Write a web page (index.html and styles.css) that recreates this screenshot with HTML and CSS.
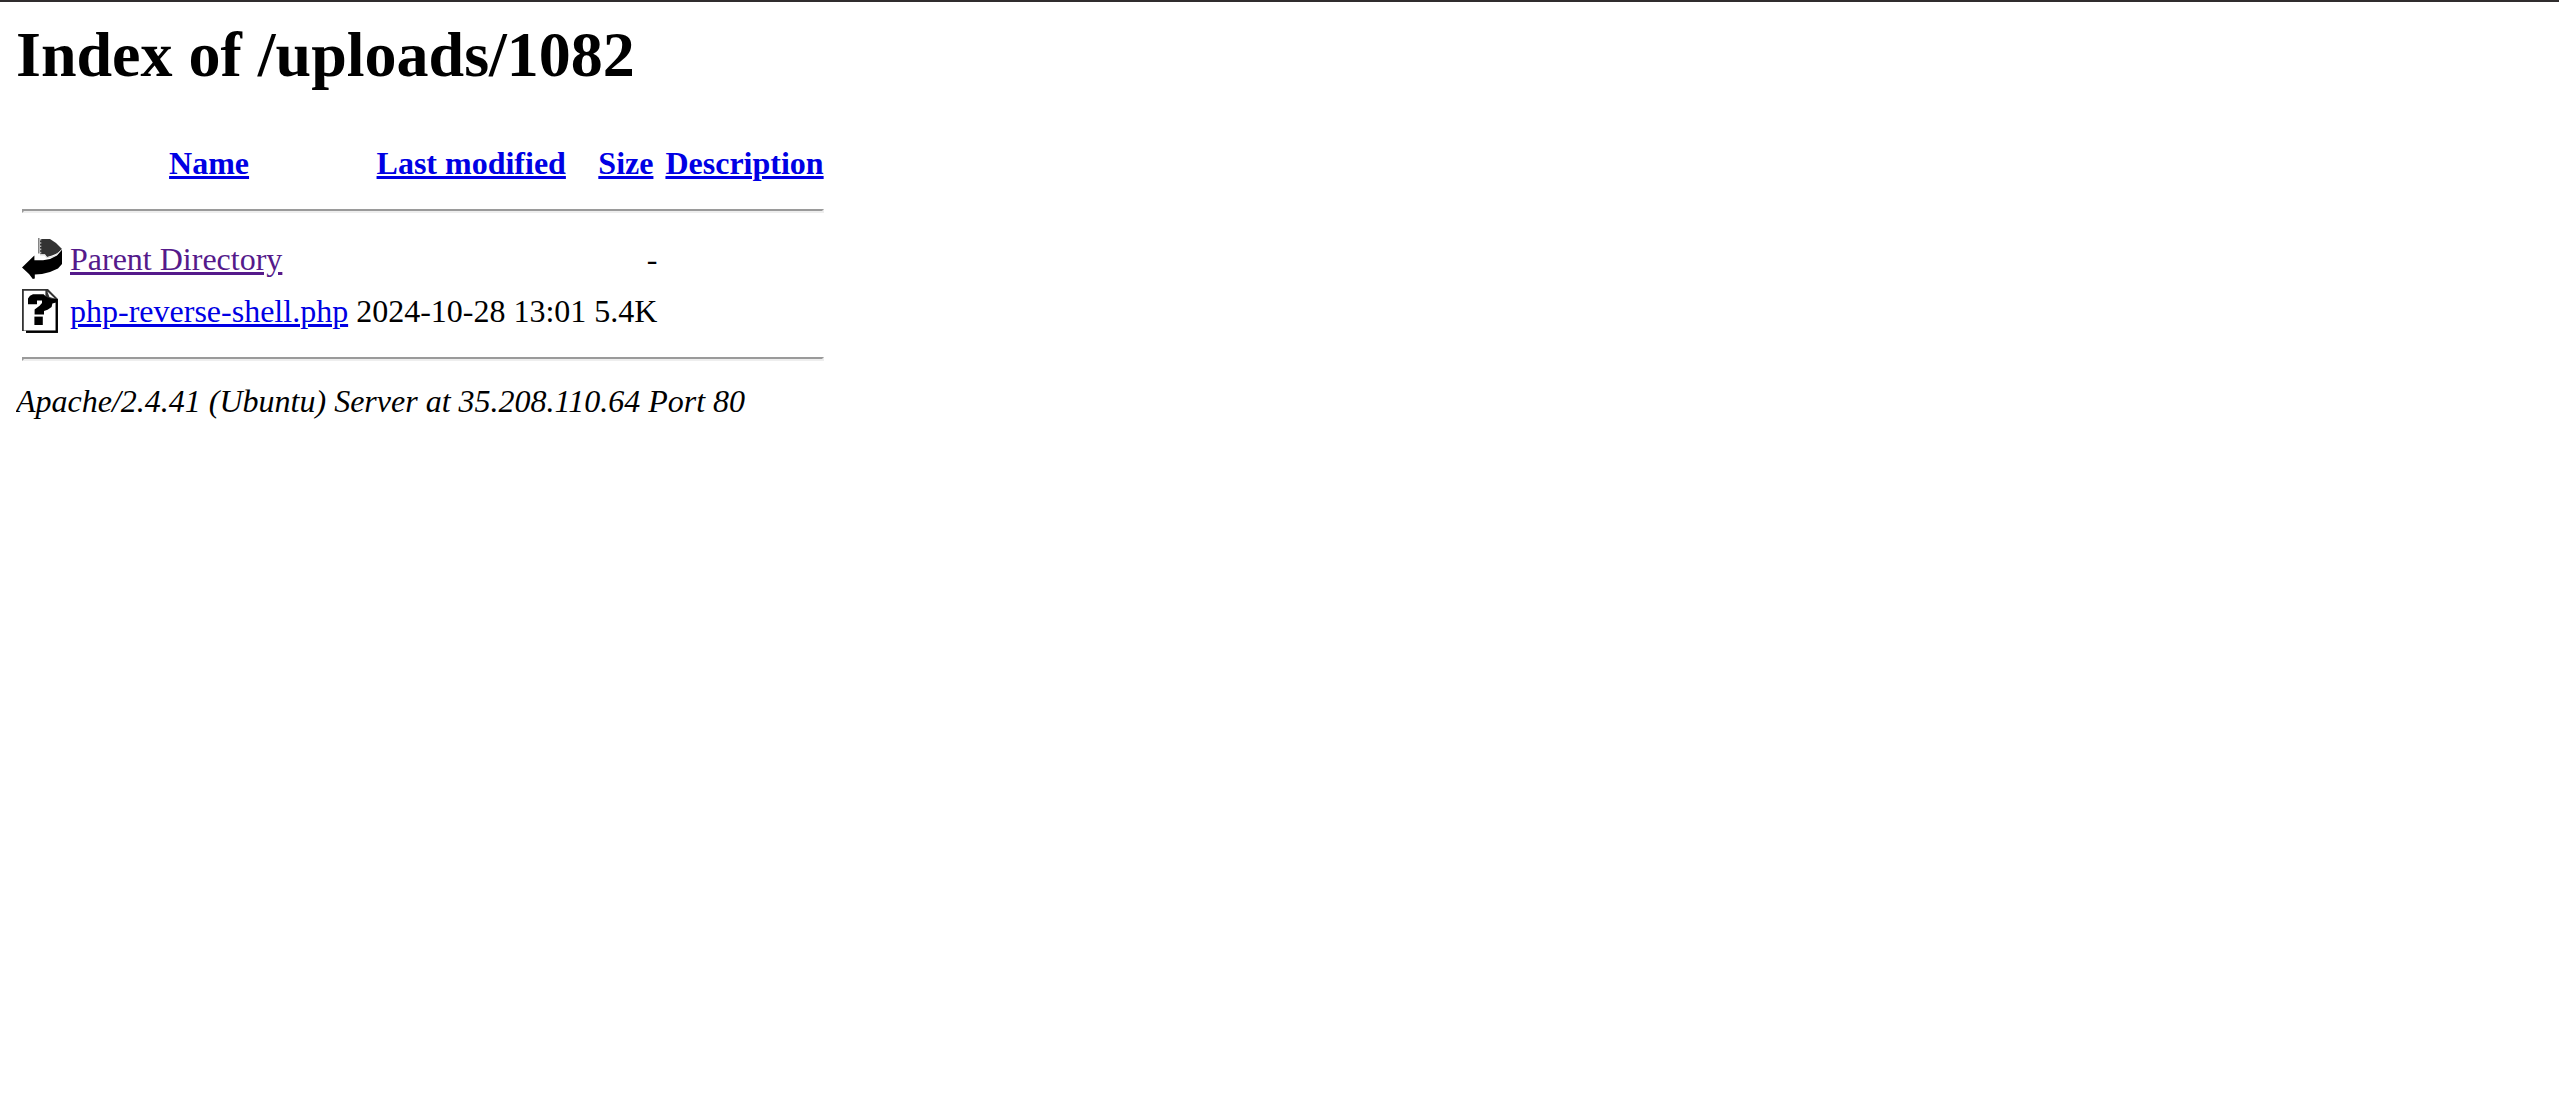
FILE: index.html
```html
<!DOCTYPE html>
<html lang="en">
<head>
<meta charset="utf-8">
<title>Index of /uploads/1082</title>
<link rel="stylesheet" href="styles.css">
</head>
<body>
<h1>Index of /uploads/1082</h1>
<table class="listing">
  <thead>
    <tr class="entry">
      <td></td>
      <th scope="col"><a href="#name">Name</a></th>
      <th scope="col"><a href="#modified">Last modified</a></th>
      <th scope="col"><a href="#size">Size</a></th>
      <th scope="col"><a href="#description">Description</a></th>
    </tr>
    <tr><td colspan="5"><hr></td></tr>
  </thead>
  <tbody>
    <tr class="entry">
      <td>
        <svg class="icon" viewBox="0 0 20 22" role="img" aria-label="Parent directory">
          <path fill="#333" d="M9 1L14 1L17 3L19 5L20 6L18 8L15 9.3L12.5 10L11.5 8.6H9Z"/>
          <path fill="none" stroke="#bbb" stroke-width="0.7" stroke-dasharray="0.8 0.8" d="M9.3 1V8.5"/>
          <path fill="none" stroke="#777" stroke-width="0.7" d="M8.4 0.5V8.3"/>
          <path fill="none" stroke="#ddd" stroke-width="0.5" d="M9 9H11.5L12.3 10.4L16 9.7L19.8 6.4"/>
          <path fill="#000" d="M0 15.2L5 10.4L6.2 9.3V11.6H10.5L14 11L17.5 9.3L20 6.4V13.5L18 15.7L14 17.5L10 18.5L6.4 18.8V20.7L5.4 21L3.5 18.5Z"/>
        </svg>
      </td>
      <td><a class="visited" href="#parent">Parent Directory</a></td>
      <td></td>
      <td class="number">-</td>
      <td></td>
    </tr>
    <tr class="entry">
      <td>
        <svg class="icon" viewBox="0 0 20 22" role="img" aria-label="Unknown file type">
          <path fill="#333" d="M0 0H13L18 5V22H2V21H0Z"/>
          <path fill="#fff" d="M0.9 0.9H11.7V4L13 5.7H16.8V20.8H0.9Z"/>
          <path fill="#fff" d="M12.7 1.2L16.4 4.8L13.7 4Z"/>
          <path fill="none" stroke="#000" stroke-width="1" d="M2 21.4H17.4V5"/>
          <path fill="#000" d="M5.5 2.6H10.8L12.2 4L15 5H17.5V6.6L15.2 7.2L14.8 9L12.8 10.4L11 11V12.8H6.3V10.3L8.8 8.4L10 7V5.8H7.5V7.6H3V4.8L4 3.4Z"/>
          <path fill="#000" d="M6.2 13.8H10.4V18H6.2Z"/>
        </svg>
      </td>
      <td><a href="#file">php-reverse-shell.php</a></td>
      <td class="number">2024-10-28 13:01</td>
      <td class="number">5.4K</td>
      <td></td>
    </tr>
  </tbody>
  <tfoot>
    <tr><td colspan="5"><hr></td></tr>
  </tfoot>
</table>
<address>Apache/2.4.41 (Ubuntu) Server at 35.208.110.64 Port 80</address>
</body>
</html>
```
FILE: styles.css
```css
html {
  border-top: 2px solid #302d2e;
  background: #fff;
}

body {
  margin: 16px;
  color: #000;
  font-family: "Liberation Serif", "Times New Roman", serif;
  font-size: 32px;
}

h1 {
  margin: 0 0 43px;
  font-size: 64px;
}

a {
  color: #0000e4;
  text-decoration-thickness: 3px;
}

a.visited {
  color: #551a8b;
}

.listing {
  border-spacing: 4px;
}

.listing th,
.listing td {
  padding: 2px;
}

.listing .entry {
  height: 48px;
}

.listing .number {
  text-align: right;
}

.icon {
  display: block;
  width: 40px;
  height: 44px;
}

hr {
  margin: 16px 0;
  border: 2px solid;
  border-color: #9a9a9a #eee #eee #9a9a9a;
}
```
